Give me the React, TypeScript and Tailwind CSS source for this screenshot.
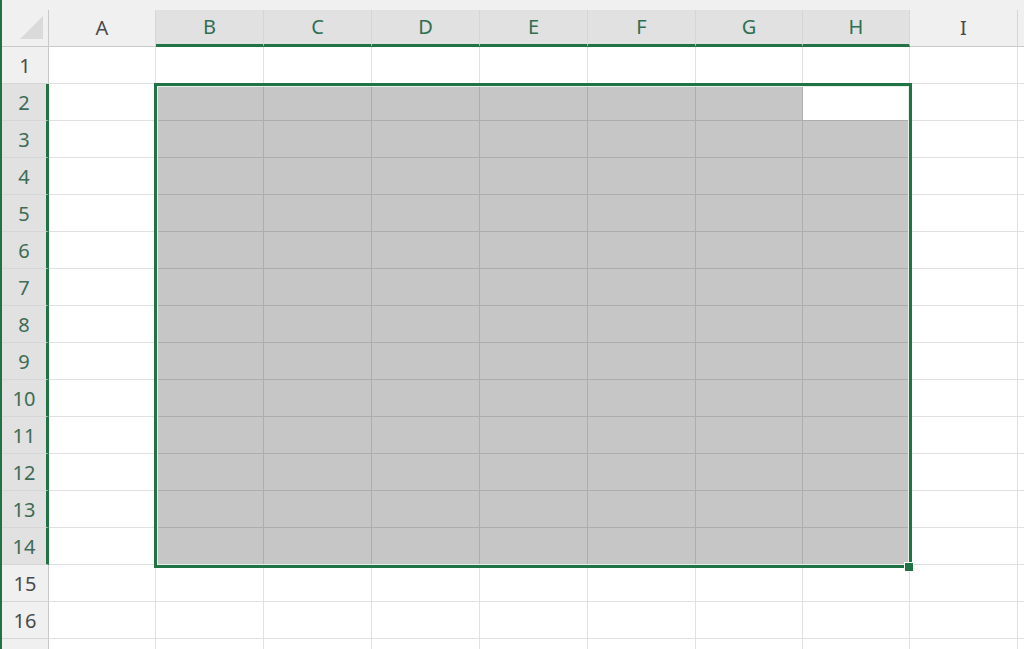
import React from "react";

type Col = { label: string; w: string };

const COLS: Col[] = [
  { label: "A", w: "w-[107px]" },
  { label: "B", w: "w-[108px]" },
  { label: "C", w: "w-[108px]" },
  { label: "D", w: "w-[108px]" },
  { label: "E", w: "w-[108px]" },
  { label: "F", w: "w-[108px]" },
  { label: "G", w: "w-[107px]" },
  { label: "H", w: "w-[107px]" },
  { label: "I", w: "w-[108px]" },
  { label: "", w: "w-[120px]" },
];

const ROWS = Array.from({ length: 17 }, (_, i) => i + 1);

// selected range B2:H14, active cell H2
const isSelCol = (ci: number) => ci >= 1 && ci <= 7;
const isSelRow = (r: number) => r >= 2 && r <= 14;

function ColHeader({ col, index }: { col: Col; index: number }) {
  const sel = isSelCol(index);
  return (
    <div
      className={`${col.w} h-[37px] shrink-0 flex items-center justify-center border-r border-[#d6d6d6] ${
        sel
          ? "bg-[#e1e1e1] text-[#2f6f52] border-b-[3px] border-b-[#217346]"
          : "bg-[#f0f0f0] text-[#4a4a4a] border-b border-b-[#c9c9c9]"
      }`}
    >
      <span className="text-[20px] leading-none">{col.label}</span>
    </div>
  );
}

function RowHeader({ row }: { row: number }) {
  const sel = isSelRow(row);
  return (
    <div
      className={`w-[47px] h-[37px] shrink-0 flex items-center justify-center pt-[2px] border-b border-[#d6d6d6] ${
        sel
          ? "bg-[#e1e1e1] text-[#3d6b55] border-r-[3px] border-r-[#217346]"
          : "bg-[#f0f0f0] text-[#4a4a4a] border-r border-r-[#c9c9c9]"
      }`}
    >
      <span className="text-[20px] leading-none">{row <= 16 ? row : ""}</span>
    </div>
  );
}

function Cell({ col, ci, row }: { col: Col; ci: number; row: number }) {
  const inRange = isSelCol(ci) && isSelRow(row);
  const active = ci === 7 && row === 2;
  const cls = inRange
    ? active
      ? "bg-white border-r border-b border-[#adadad]"
      : "bg-[#c6c6c6] border-r border-b border-[#adadad]"
    : "bg-white border-r border-b border-[#e0e0e0]";
  return <div className={`${col.w} h-[37px] shrink-0 ${cls}`} />;
}

export default function App() {
  return (
    <div
      className="relative w-[1024px] h-[649px] overflow-hidden bg-white flex"
      style={{ fontFamily: '"Noto Sans", "Open Sans", sans-serif' }}
    >
      {/* window edge */}
      <div className="w-[2px] h-full shrink-0 bg-[#217346]" />

      <div className="flex flex-col">
        {/* strip above headers */}
        <div className="h-[10px] w-[1022px] shrink-0 bg-[#f0f0f0]" />

        {/* column header row */}
        <div className="flex shrink-0">
          <div className="w-[47px] h-[37px] shrink-0 bg-[#f0f0f0] border-r border-b border-[#c9c9c9] flex items-end justify-end pr-[4px] pb-[6px]">
            <svg width="24" height="24" viewBox="0 0 24 24">
              <polygon points="23,0 23,23 0,23" fill="#dadada" />
            </svg>
          </div>
          {COLS.map((c, i) => (
            <ColHeader key={i} col={c} index={i} />
          ))}
        </div>

        {/* body rows */}
        {ROWS.map((r) => (
          <div key={r} className="flex shrink-0">
            <RowHeader row={r} />
            {COLS.map((c, i) => (
              <Cell key={i} col={c} ci={i} row={r} />
            ))}
          </div>
        ))}
      </div>

      {/* selection outline */}
      <div className="absolute left-[154px] top-[83px] w-[758px] h-[485px] border-[3px] border-[#217346] shadow-[inset_0_0_0_1px_#e3f1e8] pointer-events-none" />
      {/* fill handle */}
      <div className="absolute left-[904px] top-[562px] w-[10px] h-[10px] bg-[#217346] border border-white" />
    </div>
  );
}
